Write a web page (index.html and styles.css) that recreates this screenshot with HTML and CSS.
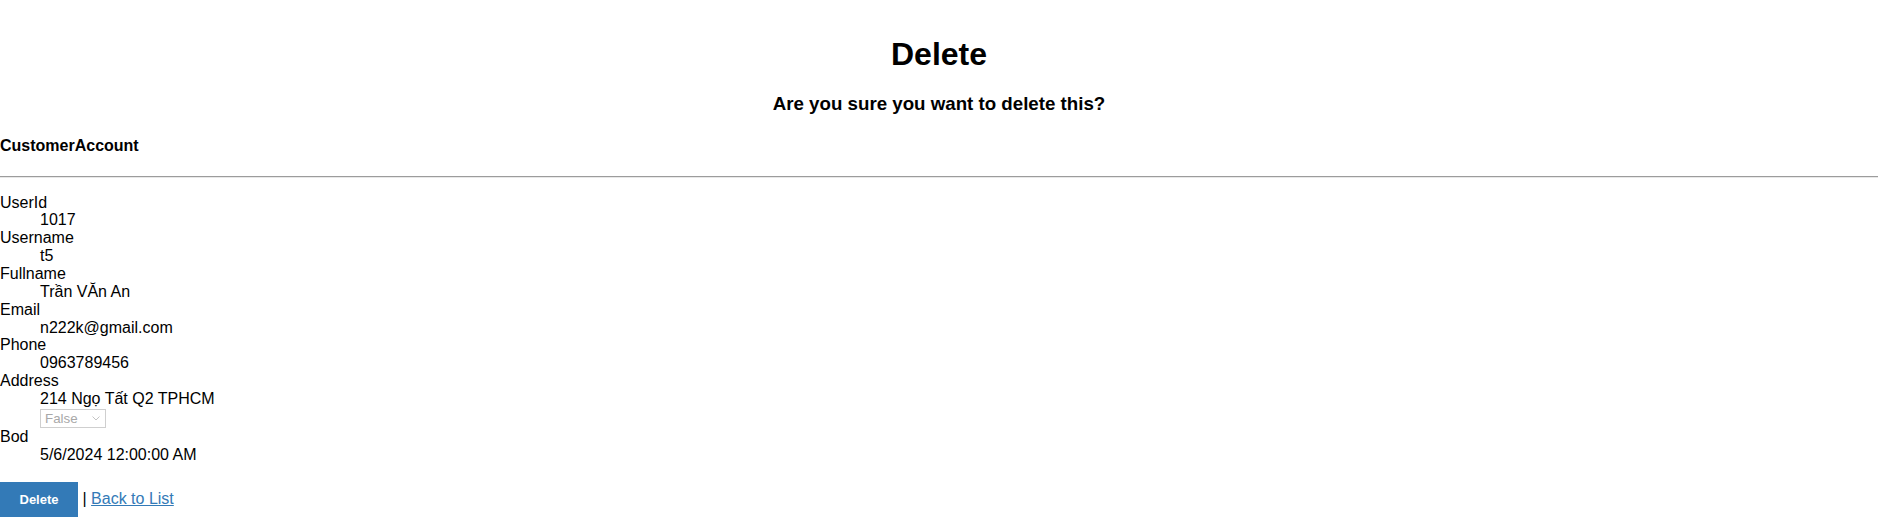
FILE: index.html
```
<!DOCTYPE html>
<html lang="en">
<head>
<meta charset="utf-8">
<title>Delete</title>
<link rel="stylesheet" href="styles.css">
</head>
<body>
<h1 class="title">Delete</h1>
<h3 class="subtitle">Are you sure you want to delete this?</h3>
<div class="details">
  <h4 class="entity">CustomerAccount</h4>
  <hr class="rule">
  <dl class="fields">
    <dt>UserId</dt>
    <dd>1017</dd>
    <dt>Username</dt>
    <dd>t5</dd>
    <dt>Fullname</dt>
    <dd>Trần VĂn An</dd>
    <dt>Email</dt>
    <dd>n222k@gmail.com</dd>
    <dt>Phone</dt>
    <dd>0963789456</dd>
    <dt>Address</dt>
    <dd>214 Ngọ Tất Q2 TPHCM</dd>
    <dt class="empty"></dt>
    <dd class="select-row">
      <span class="select-wrap">
        <select class="bool-select" disabled>
          <option>Not Set</option>
          <option>True</option>
          <option selected>False</option>
        </select>
        <svg class="chevron" width="8" height="5" viewBox="0 0 8 5" aria-hidden="true"><path d="M0.5 0.5 L4 4 L7.5 0.5" fill="none" stroke="#c4c4c4" stroke-width="1"/></svg>
      </span>
    </dd>
    <dt>Bod</dt>
    <dd>5/6/2024 12:00:00 AM</dd>
  </dl>
  <form class="actions" onsubmit="return false;">
    <input type="submit" value="Delete" class="btn-delete"> | <a href="#" class="back-link">Back to List</a>
  </form>
</div>
</body>
</html>
```

FILE: styles.css
```
html, body {
  margin: 0;
  padding: 0;
  background: #ffffff;
}

body {
  font-family: "Liberation Sans", Arial, sans-serif;
  font-size: 16px;
  line-height: 1.117;
  color: #000000;
}

.title {
  font-size: 32px;
  font-weight: bold;
  text-align: center;
  margin: 37px 0 0;
  line-height: 1.117;
}

.subtitle {
  font-size: 18.72px;
  font-weight: bold;
  text-align: center;
  margin: 21.44px 0 0;
  line-height: 1.117;
}

.entity {
  font-size: 16px;
  font-weight: bold;
  margin: 22.1px 0 0;
  line-height: 1.117;
}

.rule {
  margin: 20.7px 0 0;
  height: 0;
  border: 0;
  border-top: 1px solid #9c9c9c;
  border-bottom: 1px solid #e8e8e8;
}

.fields {
  margin: 15.8px 0 17.7px;
  padding: 0;
}

.fields dt {
  margin: 0;
  line-height: 1.117;
}

.fields dd {
  margin: 0 0 0 40px;
  line-height: 1.117;
}

.fields .empty {
  height: 0;
}

.fields .select-row {
  height: 19px;
}

.select-wrap {
  position: relative;
  display: block;
  width: 66px;
  height: 19px;
  margin-top: 1.5px;
}

.bool-select {
  -webkit-appearance: none;
  appearance: none;
  display: block;
  box-sizing: border-box;
  width: 66px;
  height: 19px;
  margin: 0;
  padding: 0 0 0 4px;
  font-family: "Liberation Sans", Arial, sans-serif;
  font-size: 13.33px;
  line-height: 17px;
  color: #a8a8a8;
  background: #ffffff;
  border: 1px solid #cfcfcf;
  border-radius: 0;
  opacity: 1;
}

.chevron {
  position: absolute;
  right: 6px;
  top: 7px;
}

.actions {
  margin: 0;
  line-height: 1.117;
}

.btn-delete {
  font-family: "Liberation Sans", Arial, sans-serif;
  font-size: 13px;
  font-weight: bold;
  line-height: 15px;
  color: #ffffff;
  background: #337ab7;
  border: 0;
  border-radius: 0;
  margin: 0;
  padding: 10px 19.5px;
  vertical-align: baseline;
  cursor: pointer;
}

.back-link {
  color: #337ab7;
  text-decoration: underline;
}
```
